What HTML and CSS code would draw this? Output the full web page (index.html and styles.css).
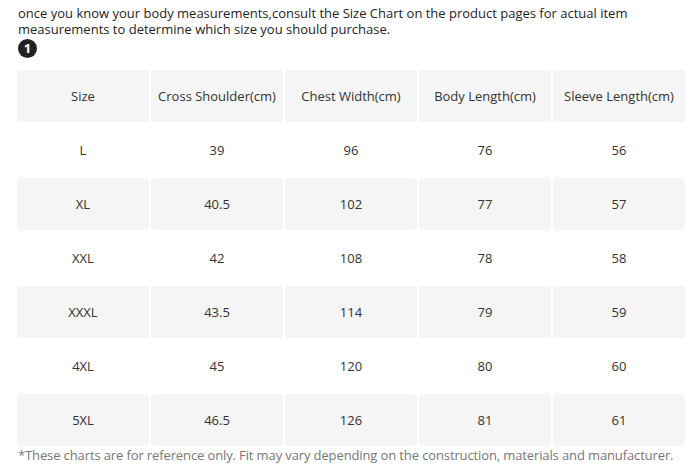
FILE: index.html
```html
<!DOCTYPE html>
<html>
<head>
<meta charset="utf-8">
<link rel="stylesheet" href="styles.css">
</head>
<body>
<div class="page">
  <p class="intro">once you know your body measurements,consult the Size Chart on the product pages for actual item measurements to determine which size you should purchase.</p>
  <div class="badge">1</div>
  <div class="chart">
    <div class="row shade"><div>Size</div><div>Cross Shoulder(cm)</div><div>Chest Width(cm)</div><div>Body Length(cm)</div><div>Sleeve Length(cm)</div></div>
    <div class="row"><div>L</div><div>39</div><div>96</div><div>76</div><div>56</div></div>
    <div class="row shade"><div>XL</div><div>40.5</div><div>102</div><div>77</div><div>57</div></div>
    <div class="row"><div>XXL</div><div>42</div><div>108</div><div>78</div><div>58</div></div>
    <div class="row shade"><div>XXXL</div><div>43.5</div><div>114</div><div>79</div><div>59</div></div>
    <div class="row"><div>4XL</div><div>45</div><div>120</div><div>80</div><div>60</div></div>
    <div class="row shade"><div>5XL</div><div>46.5</div><div>126</div><div>81</div><div>61</div></div>
  </div>
  <p class="note">*These charts are for reference only. Fit may vary depending on the construction, materials and manufacturer.</p>
</div>
</body>
</html>
```

FILE: styles.css
```css
* { box-sizing: border-box; }
html, body { margin: 0; padding: 0; background: #fff; }
body { font-family: "Open Sans", "Liberation Sans", sans-serif; font-size: 13px; color: #222; }
.page { padding: 5px 9px 0 18px; }
.intro { margin: 0; line-height: 16px; color: #1e1e1e; }
.badge {
  width: 19px; height: 19px; border-radius: 50%;
  background: #222; color: #fff;
  font-weight: 700; font-size: 13px; line-height: 19px; text-align: center;
  margin-top: 2px;
}
.chart { display: flex; flex-direction: column; gap: 2px; margin-top: 12px; margin-left: -1px; width: 668px; }
.row { display: grid; grid-template-columns: repeat(5, 1fr); gap: 2px; height: 52px; }
.row > div { display: flex; align-items: center; justify-content: center; border-radius: 3px; color: #333; }
.row.shade > div { background: #f5f5f5; }
.note { margin: 0; color: #777; line-height: 18px; white-space: nowrap; letter-spacing: -0.12px; }
```
